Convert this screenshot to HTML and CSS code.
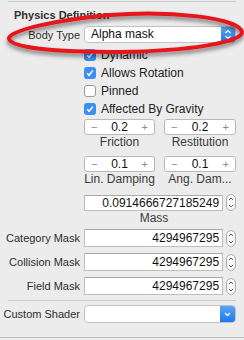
FILE: index.html
```html
<!DOCTYPE html>
<html lang="en">
<head>
    <meta charset="UTF-8">
    <meta name="viewport" content="width=device-width, initial-scale=1.0">
    <title>Physics Definition</title>
    <link rel="stylesheet" href="styles.css">
</head>
<body>
    <div class="inspector">
        <div class="rule rule-top"></div>
        <h3 class="title">Physics Definition</h3>

        <div class="row">
            <span class="label">Body Type</span>
            <div class="popup">
                <span class="popup-text">Alpha mask</span>
                <span class="popup-btn">
                    <svg width="14" height="17" viewBox="0 0 14 17"><path d="M4.5 7 L7 4.5 L9.5 7 M4.5 10 L7 12.5 L9.5 10" fill="none" stroke="#fff" stroke-width="1.2"/></svg>
                </span>
            </div>
        </div>

        <div class="checks">
            <div class="check"><svg class="box" width="12" height="12" viewBox="0 0 12 12"><rect x="0" y="0" width="12" height="12" rx="3" fill="#3a8ef4"/><path d="M3.2 6.3 L5.1 8.3 L8.8 3.6" fill="none" stroke="#fff" stroke-width="1.5"/></svg>Dynamic</div>
            <div class="check"><svg class="box" width="12" height="12" viewBox="0 0 12 12"><rect x="0" y="0" width="12" height="12" rx="3" fill="#3a8ef4"/><path d="M3.2 6.3 L5.1 8.3 L8.8 3.6" fill="none" stroke="#fff" stroke-width="1.5"/></svg>Allows Rotation</div>
            <div class="check"><svg class="box" width="12" height="12" viewBox="0 0 12 12"><rect x="0.5" y="0.5" width="11" height="11" rx="2.5" fill="#fff" stroke="#9a9a9a"/></svg>Pinned</div>
            <div class="check"><svg class="box" width="12" height="12" viewBox="0 0 12 12"><rect x="0" y="0" width="12" height="12" rx="3" fill="#3a8ef4"/><path d="M3.2 6.3 L5.1 8.3 L8.8 3.6" fill="none" stroke="#fff" stroke-width="1.5"/></svg>Affected By Gravity</div>
        </div>

        <div class="steppers">
            <div class="stepper-item">
                <div class="stepper"><span class="sign">&minus;</span><span class="value">0.2</span><span class="sign">+</span></div>
                <div class="caption">Friction</div>
            </div>
            <div class="stepper-item">
                <div class="stepper"><span class="sign">&minus;</span><span class="value">0.2</span><span class="sign">+</span></div>
                <div class="caption">Restitution</div>
            </div>
            <div class="stepper-item">
                <div class="stepper"><span class="sign">&minus;</span><span class="value">0.1</span><span class="sign">+</span></div>
                <div class="caption">Lin. Damping</div>
            </div>
            <div class="stepper-item">
                <div class="stepper"><span class="sign">&minus;</span><span class="value">0.1</span><span class="sign">+</span></div>
                <div class="caption">Ang. Dam...</div>
            </div>
        </div>

        <div class="mass">
            <div class="field-wrap">
                <div class="field">0.0914666727185249</div>
                <svg class="mini" width="10" height="17" viewBox="0 0 10 17"><rect x="0.5" y="0.5" width="9" height="16" rx="4.5" fill="#fbfbfb" stroke="#a9a9a9"/><path d="M3 6 L5 4 L7 6 M3 11 L5 13 L7 11" fill="none" stroke="#555" stroke-width="1"/></svg>
            </div>
            <div class="caption mass-caption">Mass</div>
        </div>

        <div class="row mask">
            <span class="label">Category Mask</span>
            <div class="field-wrap">
                <div class="field">4294967295</div>
                <svg class="mini" width="10" height="17" viewBox="0 0 10 17"><rect x="0.5" y="0.5" width="9" height="16" rx="4.5" fill="#fbfbfb" stroke="#a9a9a9"/><path d="M3 6 L5 4 L7 6 M3 11 L5 13 L7 11" fill="none" stroke="#555" stroke-width="1"/></svg>
            </div>
        </div>
        <div class="row mask">
            <span class="label">Collision Mask</span>
            <div class="field-wrap">
                <div class="field">4294967295</div>
                <svg class="mini" width="10" height="17" viewBox="0 0 10 17"><rect x="0.5" y="0.5" width="9" height="16" rx="4.5" fill="#fbfbfb" stroke="#a9a9a9"/><path d="M3 6 L5 4 L7 6 M3 11 L5 13 L7 11" fill="none" stroke="#555" stroke-width="1"/></svg>
            </div>
        </div>
        <div class="row mask">
            <span class="label">Field Mask</span>
            <div class="field-wrap">
                <div class="field">4294967295</div>
                <svg class="mini" width="10" height="17" viewBox="0 0 10 17"><rect x="0.5" y="0.5" width="9" height="16" rx="4.5" fill="#fbfbfb" stroke="#a9a9a9"/><path d="M3 6 L5 4 L7 6 M3 11 L5 13 L7 11" fill="none" stroke="#555" stroke-width="1"/></svg>
            </div>
        </div>

        <div class="rule rule-mid"></div>

        <div class="row shader">
            <span class="label">Custom Shader</span>
            <div class="popup">
                <span class="popup-text"></span>
                <span class="popup-btn">
                    <svg width="15" height="18" viewBox="0 0 15 18"><path d="M5 8 L7.5 10.5 L10 8" fill="none" stroke="#fff" stroke-width="1.3"/></svg>
                </span>
            </div>
        </div>

        <div class="rule rule-bottom"></div>
    </div>

    <!-- red annotation drawn over the Body Type row -->
    <svg class="annotation" width="244" height="70" viewBox="0 0 244 70">
        <defs>
            <filter id="shadow" x="-10%" y="-30%" width="120%" height="180%">
                <feDropShadow dx="0" dy="3" stdDeviation="2" flood-color="#000" flood-opacity="0.5"/>
            </filter>
        </defs>
        <path d="M9 38 C12 30, 55 20, 110 15 C170 10, 240 18, 242 32 C243 42, 190 51, 120 52 C55 52, 8 48, 9 38 Z" fill="none" stroke="#e5161c" stroke-width="4" filter="url(#shadow)"/>
    </svg>
</body>
</html>
```

FILE: styles.css
```css
body {
    margin: 0;
    background-color: #ececec;
    font-family: "Liberation Sans", Arial, sans-serif;
    color: #2b2b2b;
    width: 244px;
    height: 340px;
    position: relative;
    overflow: hidden;
}
.inspector {
    display: flex;
    flex-direction: column;
}
.rule {
    height: 1px;
    background-color: #cbcbcb;
    margin: 0 8px;
}
.rule-top {
    margin-top: 1px;
}
.rule-mid {
    margin-top: 5px;
}
.rule-bottom {
    margin: 14px 0 0;
    background-color: #bdbdbd;
}
.title {
    margin: 7px 0 4px 14px;
    font-size: 11px;
    font-weight: bold;
    line-height: 13px;
    color: #333;
}
.row {
    display: flex;
    align-items: center;
    height: 17px;
}
.label {
    flex: 1;
    margin-right: 4px;
    text-align: right;
    font-size: 11px;
    white-space: nowrap;
    color: #2e2e2e;
}
.popup {
    display: flex;
    width: 152px;
    height: 17px;
    margin-right: 8px;
    box-sizing: border-box;
    background-color: #fff;
    border: 1px solid #c2c2c2;
    border-radius: 4px;
    overflow: hidden;
}
.popup-text {
    flex: 1;
    padding-left: 6px;
    font-size: 12px;
    line-height: 15px;
    color: #111;
}
.popup-btn {
    width: 14px;
    display: flex;
    align-items: center;
    justify-content: center;
    background: linear-gradient(#5aa5f8, #1b77ec);
}
.checks {
    display: flex;
    flex-direction: column;
    margin-top: 3px;
    padding-left: 84px;
}
.check {
    display: flex;
    align-items: center;
    height: 18px;
    font-size: 12px;
    color: #222;
}
.box {
    margin-right: 5px;
}
.steppers {
    display: grid;
    grid-template-columns: 71px 72px;
    column-gap: 9px;
    row-gap: 7px;
    margin-top: 1px;
    padding-left: 84px;
}
.stepper {
    display: flex;
    align-items: center;
    justify-content: space-between;
    height: 16px;
    box-sizing: border-box;
    padding: 0 6px;
    background-color: #fff;
    border: 1px solid #b9b9b9;
    border-radius: 3px;
    font-size: 12px;
}
.sign {
    color: #8a8a8a;
    font-size: 11px;
}
.value {
    color: #111;
}
.caption {
    text-align: center;
    font-size: 12px;
    line-height: 14px;
    color: #3a3a3a;
    white-space: nowrap;
}
.mass {
    display: flex;
    flex-direction: column;
    margin-top: 8px;
    padding-left: 84px;
    width: 152px;
}
.mass-caption {
    width: 140px;
}
.field-wrap {
    display: flex;
    align-items: center;
    gap: 3px;
    width: 152px;
    margin-right: 8px;
}
.field {
    width: 140px;
    height: 16px;
    box-sizing: border-box;
    padding-right: 3px;
    text-align: right;
    font-size: 12px;
    line-height: 14px;
    color: #111;
    background-color: #fff;
    border: 1px solid #bdbdbd;
    border-top-color: #a9a9a9;
}
.mask {
    height: 18px;
    margin-top: 4px;
}
.mask .field {
    height: 18px;
    line-height: 16px;
}
.mask + .mask {
    margin-top: 6px;
}
.shader {
    height: 18px;
    margin-top: 4px;
}
.shader .popup {
    height: 18px;
    border-radius: 4px;
}
.shader .popup-btn {
    width: 15px;
}
.annotation {
    position: absolute;
    left: 0;
    top: 0;
}
```
